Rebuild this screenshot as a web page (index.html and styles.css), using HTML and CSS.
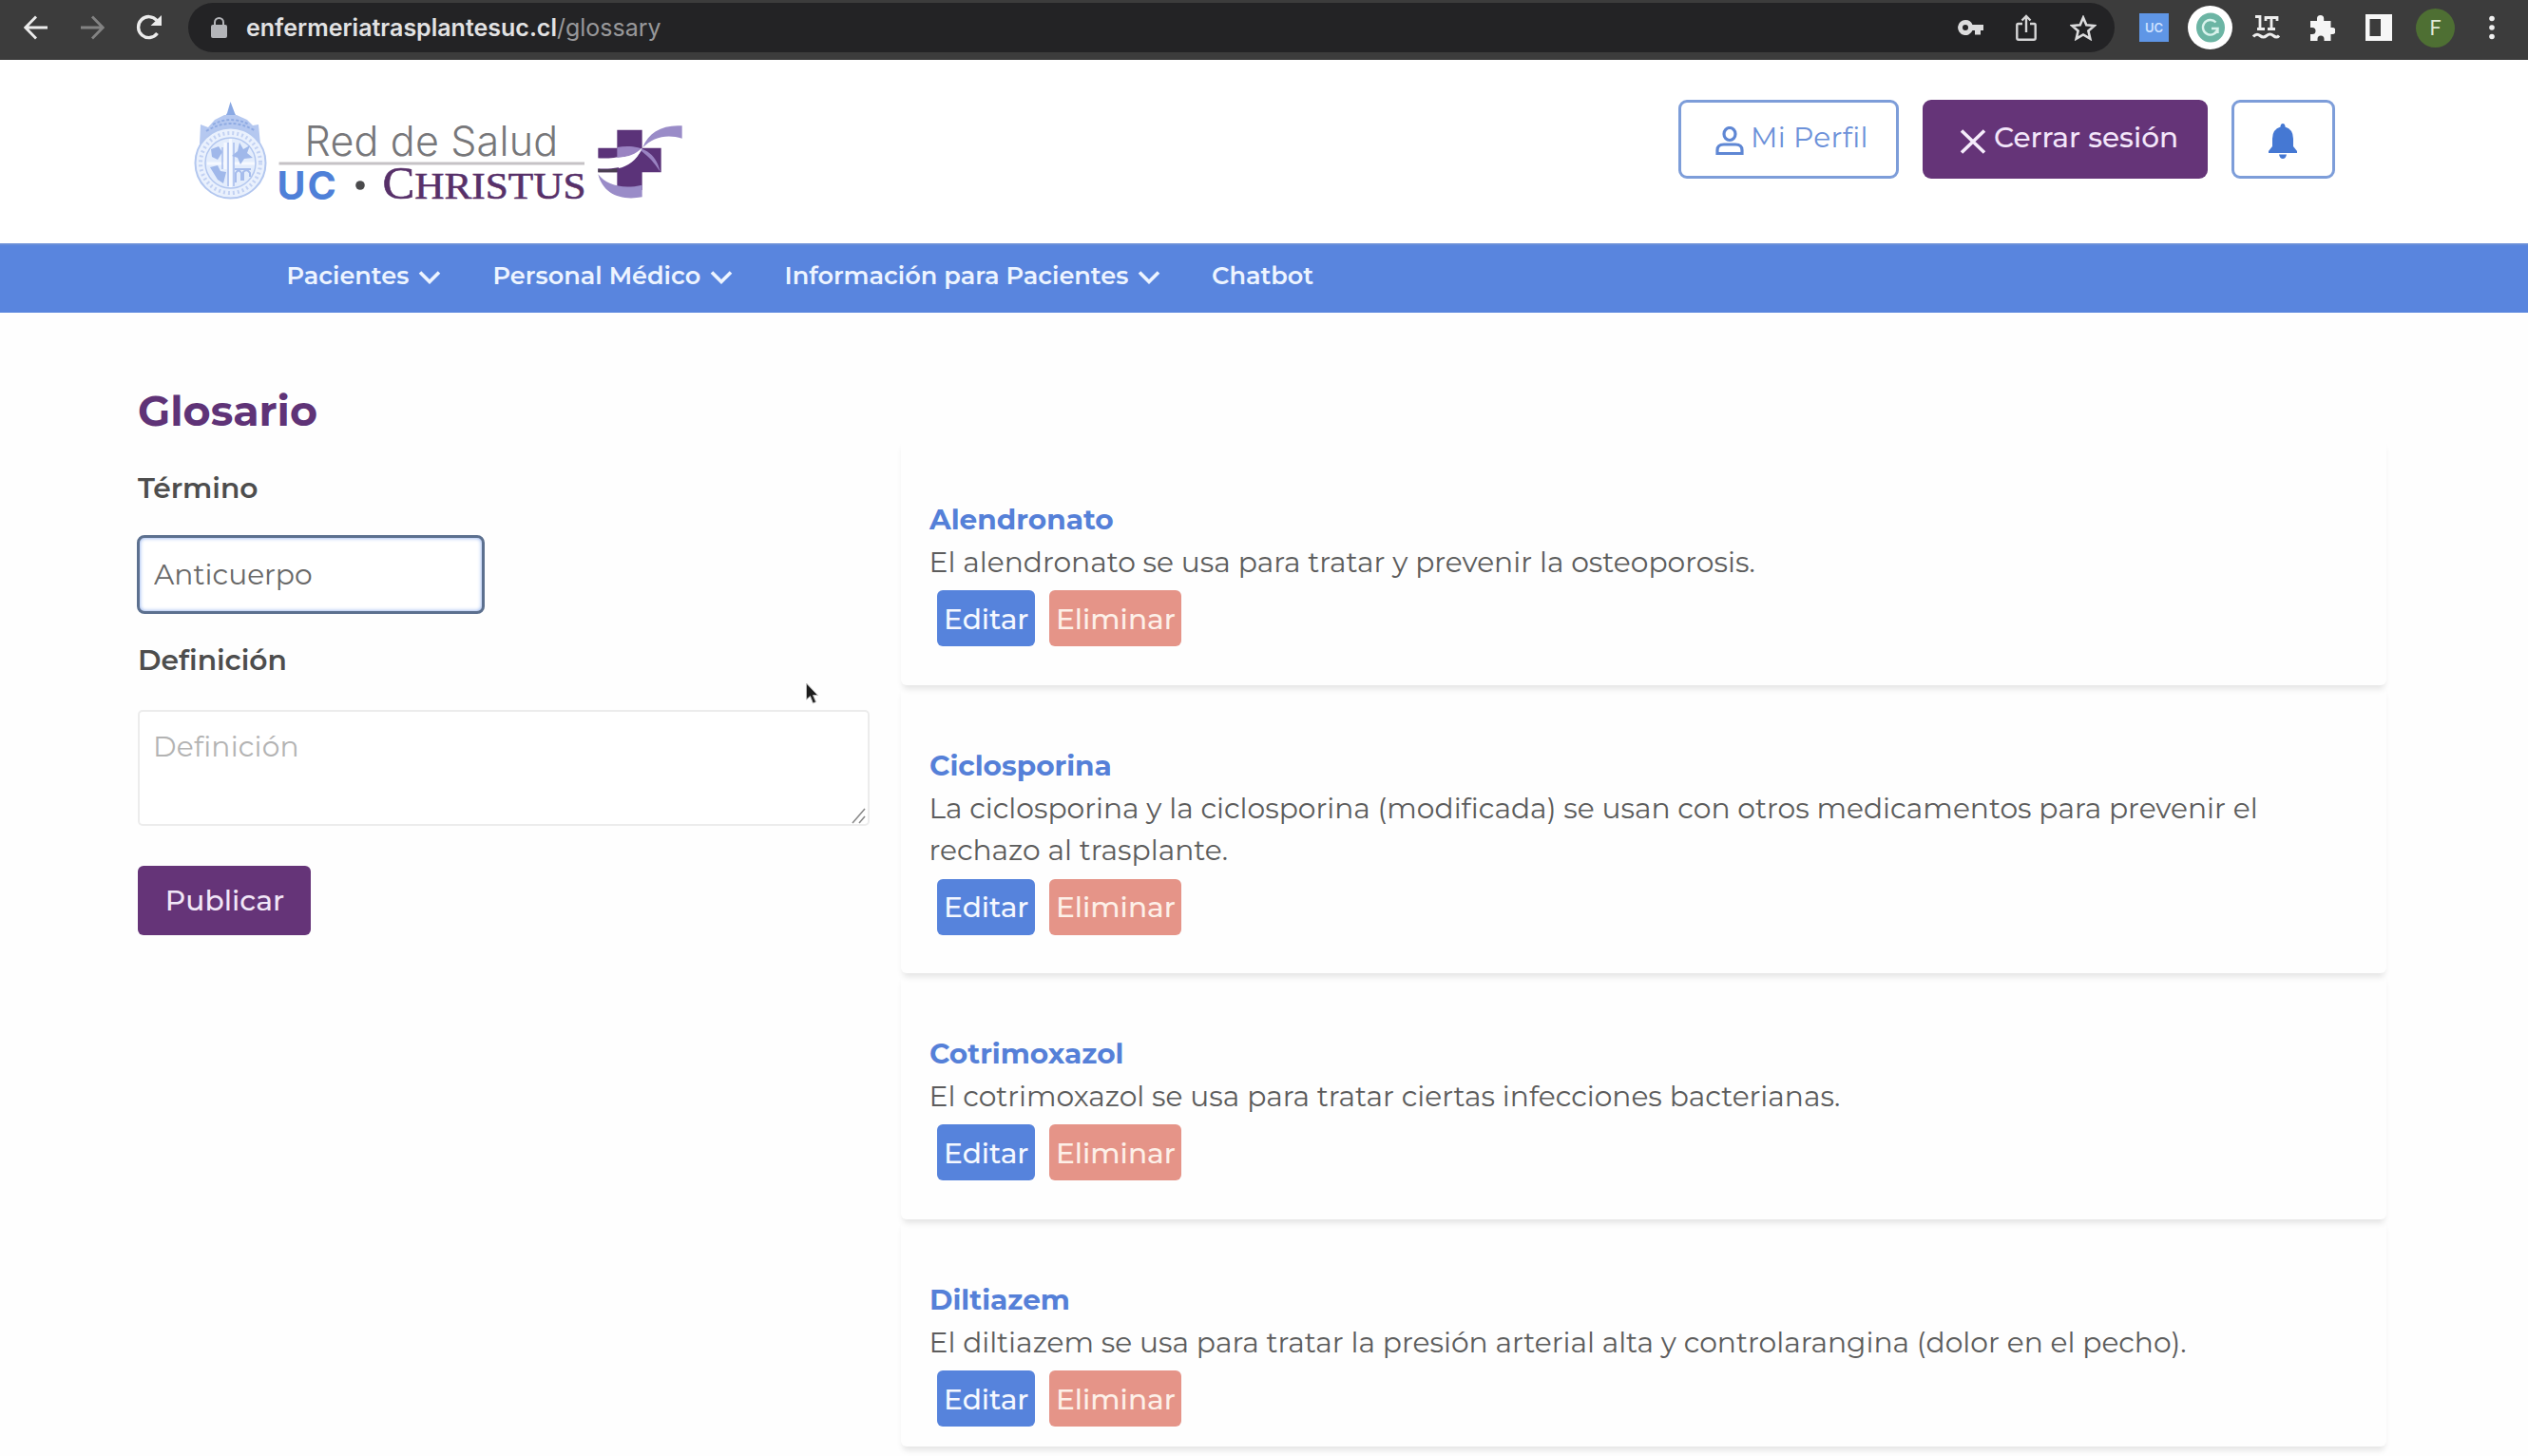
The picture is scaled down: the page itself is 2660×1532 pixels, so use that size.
FILE: index.html
```html
<!DOCTYPE html>
<html lang="es">
<head>
<meta charset="utf-8">
<title>Glosario</title>
<link rel="stylesheet" href="styles.css">
</head>
<body>
<div class="toolbar">
  <svg class="tb-back" width="26" height="26" viewBox="0 0 26 26"><path d="M25 13H2M13 1.500L1.800 13L13 24.500"/></svg>
  <svg class="tb-forward" width="26" height="26" viewBox="0 0 26 26"><path d="M1 13H24M13 1.500L24.200 13L13 24.500"/></svg>
  <svg class="tb-reload" width="28" height="28" viewBox="0 0 28 28"><path class="line" d="M22.500 20A11 11 0 1 1 22 6.500"/><path class="solid" d="M27 1V12H15.500Z"/></svg>
  <div class="omnibox">
    <svg width="17" height="22" viewBox="0 0 17 22"><rect y="8" width="17" height="14" rx="2" fill="#b4b5b9"/><path d="M4 9V5.500a4.500 4.500 0 0 1 9 0V9" fill="none" stroke="#b4b5b9" stroke-width="2"/></svg>
    <span class="host">enfermeriatrasplantesuc.cl</span><span class="path">/glossary</span>
    <svg class="key" width="27" height="18" viewBox="0 0 27 18"><path fill="#dcdcdd" fill-rule="evenodd" d="M8 1a8 8 0 1 0 7.500 11H18v4.500h6V12h3V6H15.500A8 8 0 0 0 8 1zM8 6a3 3 0 1 1 0 6a3 3 0 0 1 0-6z"/></svg>
    <svg class="share" width="22" height="28" viewBox="0 0 22 28"><path d="M7 10H2.500Q1.300 10 1.300 11.500V25Q1.300 26.700 3 26.700H19Q20.700 26.700 20.700 25V11.500Q20.700 10 19.500 10H15M11 19V2M6.500 6.500L11 2L15.500 6.500" fill="none" stroke="#d6d6d7" stroke-width="2.400"/></svg>
    <svg class="star" width="28" height="27" viewBox="0 0 28 27"><path d="M14 2.500L17.300 10.200L25.700 11L19.400 16.500L21.300 24.700L14 20.400L6.700 24.700L8.600 16.500L2.300 11L10.700 10.200Z" fill="none" stroke="#dcdcdd" stroke-width="2.600"/></svg>
  </div>
  <span class="ext-uc">UC</span>
  <span class="ext-g"><svg width="30" height="32" viewBox="0 0 30 32"><ellipse cx="15" cy="16" rx="15" ry="15.500" fill="#6cb5a4"/><path d="M20.500 10.500A7.800 7.800 0 1 0 22.500 17H16M22.500 16.500V22" fill="none" stroke="#d9f2ec" stroke-width="2.400"/></svg></span>
  <svg class="ext-lt" width="29" height="26" viewBox="0 0 29 26"><path d="M3 1.500H8V14M5 14.500H13M14 6V2.500H26V6M20 3V15M16 14.500H24" fill="none" stroke="#eee" stroke-width="2.800"/><path d="M1 22.500Q4.500 18.500 8 21.500T15 21.500T22 21.500T28 21.500" fill="none" stroke="#eee" stroke-width="3"/></svg>
  <svg class="ext-puzzle" width="27" height="29" viewBox="0 0 27 29"><path fill="#f5f5f5" d="M1 7H8V4.500a3.600 3.600 0 0 1 7.200 0V7H22.500V14H24a3.400 3.400 0 0 1 0 7H22.500V28H15.500V26a3.500 3.500 0 0 0-7 0V28H1V21H3a3.500 3.500 0 0 0 0-7H1Z"/></svg>
  <svg class="ext-panel" width="28" height="28" viewBox="0 0 28 28"><path fill="#f7f7f7" fill-rule="evenodd" d="M0 0H28V28H0ZM4.500 5V23H16V5Z"/></svg>
  <span class="avatar">F</span>
  <svg class="tb-menu" width="8" height="26" viewBox="0 0 8 26"><circle cx="4" cy="3.500" r="2.800"/><circle cx="4" cy="13" r="2.800"/><circle cx="4" cy="22.500" r="2.800"/></svg>
</div>

<header class="header">
  <svg class="logo" width="530" height="115" viewBox="200 100 530 115">
    <g class="crest">
      <path d="M242.500 107L247 119L251 127H234L239 119Z" fill="#8aa9e4"/>
      <path d="M211 131L219 134L226 126L236 121H249L260 126L266 132L272 131L274 152Q262 138 243 138Q223 138 210 152Z" fill="#b5c8f0"/>
      <path d="M217 138Q243 122 269 138M224 131Q243 121 262 131" fill="none" stroke="#8fabe3" stroke-width="2" stroke-dasharray="3 2"/>
      <circle cx="242.500" cy="171.500" r="37" fill="#eaf1fd" stroke="#b3c7ef" stroke-width="2"/>
      <circle cx="242.500" cy="171.500" r="31.500" fill="none" stroke="#c3d2f3" stroke-width="4" stroke-dasharray="2 3"/>
      <circle cx="242.500" cy="171.500" r="26.500" fill="#e4edfc" stroke="#b3c7ef" stroke-width="1.500"/>
      <path d="M242.500 146V197M237 150V178M218 172H236M246 172H268" stroke="#f6f9ff" stroke-width="3"/>
      <path d="M240 150V196M246 150V196M234 155V178" stroke="#a6bcec" stroke-width="1.500"/>
      <path d="M252 150L256 157L263 153L260 161L266 166L257 167L253 173L250 166L244 164L250 159ZM222 157L230 154L234 160L229 168L223 165ZM221 176L229 174L232 180L238 181L235 193L229 189Z" fill="#a0b8ea"/>
      <path d="M248 192V182Q251 177 254 182V190M256 190V181Q260 177 263 182V186M247 178H264" fill="none" stroke="#a6bcec" stroke-width="2"/>
    </g>
    <text class="logo-red" x="320.500" y="164">Red de Salud</text>
    <rect x="293.500" y="170.500" width="321.500" height="3" fill="#c6c2c6"/>
    <text class="logo-uc" x="291.500" y="209.500">UC</text>
    <circle cx="379" cy="195" r="4.800" fill="#4a4a4c"/>
    <text class="logo-christus" x="402.500" y="209" textLength="214" lengthAdjust="spacingAndGlyphs"><tspan class="cap">C</tspan>HRISTUS</text>
    <g transform="translate(615 120) scale(.33333)">
      <path fill="#5b3379" d="M103 50H182V107H242V184H182V240H103V184H43V107H103Z"/>
      <path fill="#fff" d="M40 139C95 143 140 130 182 107C162 152 120 178 40 172Z"/>
      <path fill="#4b4052" d="M43 173Q75 177 103 171V184H43Z"/>
      <path fill="#9a83c2" d="M103 105C155 96 222 104 239 182C218 150 205 137 180 117C155 132 130 136 103 138Z"/>
      <path fill="#fff" d="M182 107C165 148 135 165 108 171L103 138C140 136 160 126 182 107Z"/>
      <path fill="#9a8cc8" d="M184 106C202 58 245 33 308 37V77C262 62 215 72 184 106Z"/>
      <path fill="#9a8cc8" d="M43 190C58 252 115 275 182 262V224C120 238 70 225 43 190Z"/>
    </g>
  </svg>
  <div class="actions">
    <button class="btn btn-outline profile"><svg width="30" height="31" viewBox="0 0 30 31"><ellipse cx="15" cy="8" rx="6" ry="6.500"/><path d="M2 28.500V25Q2 19 9 19H21Q28 19 28 25V28.500Z"/></svg><span>Mi Perfil</span></button>
    <button class="btn btn-purple logout"><svg width="28" height="26" viewBox="0 0 28 26"><path d="M2 1.500L26 24.500M26 1.500L2 24.500"/></svg><span>Cerrar sesión</span></button>
    <button class="btn btn-outline bell"><svg width="30" height="37" viewBox="0 0 30 37"><path d="M15 0Q17.500 0 17.500 3.500Q26 6 26 16V24L30 29V31H0V29L4 24V16Q4 6 12.500 3.500Q12.500 0 15 0ZM11 32.500H19Q18 37 15 37T11 32.500Z"/></svg></button>
  </div>
</header>

<nav class="nav">
  <a class="nav-patients"><span>Pacientes</span><svg width="24" height="15" viewBox="0 0 24 15"><path d="M2 2.500L12 12.500L22 2.500"/></svg></a>
  <a class="nav-staff"><span>Personal Médico</span><svg width="24" height="15" viewBox="0 0 24 15"><path d="M2 2.500L12 12.500L22 2.500"/></svg></a>
  <a class="nav-info"><span>Información para Pacientes</span><svg width="24" height="15" viewBox="0 0 24 15"><path d="M2 2.500L12 12.500L22 2.500"/></svg></a>
  <a class="nav-chat"><span>Chatbot</span></a>
</nav>

<main class="main">
  <form class="form">
    <h1>Glosario</h1>
    <label class="label-term" for="term">Término</label>
    <input id="term" type="text" value="Anticuerpo">
    <label class="label-definition" for="definition">Definición</label>
    <div class="area">
      <textarea id="definition" placeholder="Definición"></textarea>
      <svg class="grip" width="16" height="18" viewBox="0 0 16 18"><path d="M1 17L14 2M8 17L14 10"/></svg>
    </div>
    <button type="button" class="btn-publish">Publicar</button>
  </form>

  <section class="list">
    <article class="card">
      <h2>Alendronato</h2>
      <p>El alendronato se usa para tratar y prevenir la osteoporosis.</p>
      <div class="card-actions"><button class="edit">Editar</button><button class="delete">Eliminar</button></div>
    </article>
    <article class="card card-tall">
      <h2>Ciclosporina</h2>
      <p>La ciclosporina y la ciclosporina (modificada) se usan con otros medicamentos para prevenir el<br>rechazo al trasplante.</p>
      <div class="card-actions"><button class="edit">Editar</button><button class="delete">Eliminar</button></div>
    </article>
    <article class="card">
      <h2>Cotrimoxazol</h2>
      <p>El cotrimoxazol se usa para tratar ciertas infecciones bacterianas.</p>
      <div class="card-actions"><button class="edit">Editar</button><button class="delete">Eliminar</button></div>
    </article>
    <article class="card card-last">
      <h2>Diltiazem</h2>
      <p>El diltiazem se usa para tratar la presión arterial alta y controlarangina (dolor en el pecho).</p>
      <div class="card-actions"><button class="edit">Editar</button><button class="delete">Eliminar</button></div>
    </article>
  </section>
</main>

<svg class="cursor" width="15" height="24" viewBox="0 0 15 24"><path d="M1.500 1V18L5.500 14.500L8.500 22L11.500 20.500L8.500 13.500H13.500Z" fill="#1c1c1c" stroke="#bbb" stroke-width="1"/></svg>
</body>
</html>
```
FILE: styles.css
```css
* { box-sizing: border-box; }
body {
  margin: 0;
  width: 2660px;
  height: 1532px;
  overflow: hidden;
  background: #fefefe;
  color: #5c5c5c;
  font-family: Montserrat, Inter, sans-serif;
  font-size: 29.73px;
  font-variant-ligatures: none;
}
svg { display: block; flex: none; }
h1, h2, p { margin: 0; }
button, input, textarea { font: inherit; font-variant-ligatures: none; }

/* browser toolbar */
.toolbar {
  display: flex;
  align-items: center;
  height: 63px;
  padding: 0 0 5px 25px;
  background: #3c3c3c;
}
.tb-back, .tb-forward { fill: none; stroke: #ececec; stroke-width: 2.8; }
.tb-forward { margin-left: 33px; stroke: #838383; }
.tb-reload { margin-left: 33px; }
.tb-reload .line { fill: none; stroke: #ececec; stroke-width: 3.4; }
.tb-reload .solid { fill: #ececec; }
.omnibox {
  display: flex;
  align-items: center;
  width: 2027px;
  height: 52px;
  margin-left: 27px;
  padding: 0 19px 0 24px;
  border-radius: 26px;
  background: #232325;
  font: 25px Inter, sans-serif;
}
.host { margin-left: 20px; color: #e2e2e3; font-weight: 600; }
.path { color: #98989a; }
.key { margin-left: auto; }
.share { margin-left: 34px; }
.star { margin-left: 35px; }
.ext-uc {
  width: 31px;
  height: 30px;
  margin-left: 26px;
  background: #5f96e6;
  color: #cfe2ff;
  font: 600 13px/30px Inter, sans-serif;
  text-align: center;
}
.ext-g {
  display: flex;
  align-items: center;
  justify-content: center;
  width: 47px;
  height: 46px;
  margin-left: 20px;
  border-radius: 50%;
  background: #fff;
}
.ext-lt { margin-left: 21px; }
.ext-puzzle { margin-left: 31px; }
.ext-panel { margin-left: 32px; }
.avatar {
  width: 41px;
  height: 41px;
  margin-left: 25px;
  border-radius: 50%;
  background: #4e6f33;
  color: #dfe8d5;
  font: 22px/41px Roboto, sans-serif;
  text-align: center;
}
.tb-menu { margin-left: 35px; fill: #f0f0f0; }

/* site header */
.header {
  display: flex;
  justify-content: space-between;
  height: 193px;
  padding: 37px 203px 0 200px;
  background: #fff;
}
.logo { overflow: visible; }
.logo-red { font: 300 43px Inter, sans-serif; letter-spacing: .18px; fill: #77777a; }
.logo-uc { font: 700 41px Inter, sans-serif; letter-spacing: 2px; fill: #4f80d8; }
.logo-christus { font: 41px "Liberation Serif", serif; fill: #573069; stroke: #573069; stroke-width: .6; }
.logo-christus .cap { font-size: 48px; }
.actions { display: flex; gap: 25px; padding-top: 5px; }
.btn {
  display: flex;
  height: 83px;
  padding: 0;
  border-radius: 9px;
  line-height: 78px;
}
.btn-outline { border: 3px solid #7d9dd9; background: #fff; color: #6c91d9; }
.btn-purple { border: 0; background: #653478; color: #f3e6fa; }
.profile { width: 232px; padding-left: 36px; line-height: 73px; }
.profile svg { margin-top: 25px; fill: none; stroke: #5f87d4; stroke-width: 3.2; }
.profile span { margin-left: 7px; letter-spacing: .3px; }
.logout { width: 300px; padding-left: 39px; }
.logout svg { margin-top: 31px; fill: none; stroke: #f5ecfb; stroke-width: 3.6; }
.logout span { margin-left: 8px; font-size: 29.6px; font-weight: 500; line-height: 79px; }
.bell { width: 109px; padding: 22px 0 0 36px; }
.bell svg { fill: #4578d3; }

/* navigation */
.nav {
  display: flex;
  height: 73px;
  padding: 0 301.5px;
  background: #5985de;
  border-top: 2px solid #6a8fd8;
  color: #edf4ff;
  font-size: 25.6px;
  font-weight: 600;
  line-height: 63px;
}
.nav a { display: flex; }
.nav svg { margin: 26px 0 0 10px; fill: none; stroke: #edf4ff; stroke-width: 3.6; }
.nav-patients { width: 217px; }
.nav-staff { width: 307px; }
.nav-info { width: 449.5px; }

/* page */
.main { display: grid; grid-template-columns: 770px 1563px; column-gap: 33px; padding-left: 145px; }
.form { display: flex; flex-direction: column; align-items: flex-start; padding-top: 75px; }
.form h1 {
  color: #5f3377;
  font-size: 44.4px;
  font-weight: 700;
  line-height: 56px;
}
.form label { color: #4d4d4d; font-weight: 600; line-height: 42px; }
.label-term { margin-top: 32px; }
.label-definition { margin-top: 27px; }
.form input {
  width: 366px;
  height: 83px;
  margin: 29px 0 0 -1px;
  padding: 0 15px 2px;
  border: 3px solid #5c708f;
  border-radius: 8px;
  outline: 0;
  background: #fff;
  box-shadow: inset 0 0 4px #7fa4ee;
  color: #686868;
}
.area { position: relative; margin-top: 32px; }
.form textarea {
  display: block;
  width: 770px;
  height: 122px;
  padding: 14px;
  border: 2px solid #ececec;
  border-radius: 5px;
  background: #fff;
  line-height: 44px;
  resize: none;
}
.form textarea::placeholder { color: #b3b3b3; letter-spacing: .2px; }
.grip { position: absolute; right: 3px; bottom: 2px; fill: none; stroke: #8a8a8a; stroke-width: 1.6; }
.btn-publish {
  width: 182px;
  height: 73px;
  margin-top: 42px;
  padding: 0 0 2px 1px;
  border: 0;
  border-radius: 6px;
  background: #653478;
  color: #f1e6f7;
  font-weight: 500;
}

/* glossary entries */
.list { padding-top: 133px; }
.card {
  height: 259px;
  padding: 62px 29px 0 30px;
  border-radius: 6px;
  box-shadow: 0 6px 6px -2px rgba(0, 0, 0, .1);
  line-height: 44.5px;
}
.card-tall { height: 303px; }
.card-last { height: 239px; }
.card h2 { color: #5580d8; font-size: 29.6px; font-weight: 700; line-height: 44.5px; }
.card p { margin-left: -.5px; white-space: nowrap; }
.card-actions { display: flex; gap: 15px; padding: 8px 0 0 8px; }
.card-actions button {
  height: 59px;
  padding: 0 0 0 7px;
  border: 0;
  border-radius: 6px;
  color: #f5f8ff;
  font-size: 29.6px;
  font-weight: 500;
  line-height: 58px;
  text-align: left;
}
.edit { width: 103px; background: #5683dc; }
.card-actions .delete { width: 139px; background: #e59488; color: #fdf0e8; }

.cursor { position: absolute; left: 847px; top: 718px; }
```
